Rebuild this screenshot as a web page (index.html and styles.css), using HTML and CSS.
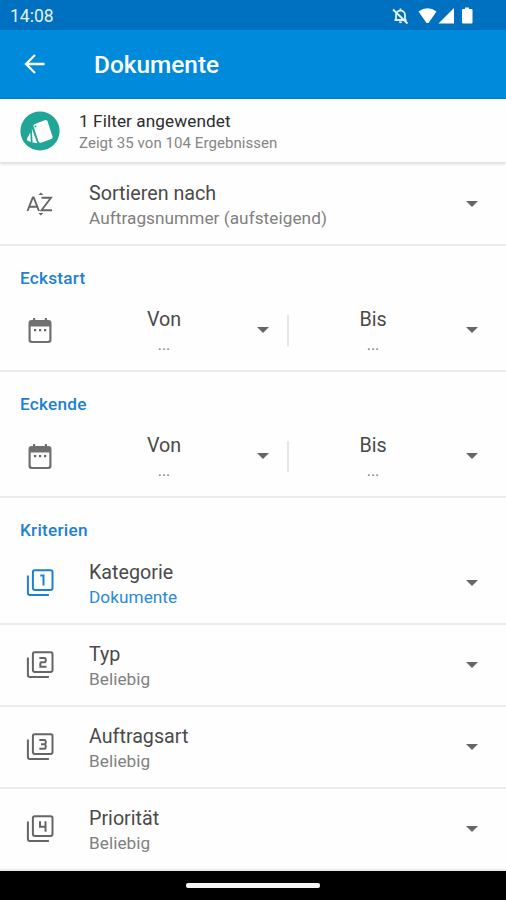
FILE: index.html
```html
<!DOCTYPE html>
<html lang="de">

<head>
  <meta charset="UTF-8">
  <meta name="viewport" content="width=device-width, initial-scale=1.0">
  <title>Dokumente</title>

  <link rel="stylesheet" href="styles.css">
</head>

<body>
  <div class="statusbar">
    <span class="clock">14:08</span>
    <svg class="status-icons" width="84" height="20" viewBox="0 0 84 20">
      <g fill="none" stroke="#e6f1fa" stroke-width="1.8">
        <path d="M4.500 14h12M6 13.500V9a4.500 4.500 0 0 1 9 0v4.500M10.500 4.500V2.500"/>
        <path d="M3 3.500l14.500 14"/>
      </g>
      <path d="M8.800 15.500h3.400a1.700 1.700 0 0 1-3.400 0z" fill="#e6f1fa"/>
      <path d="M28.500 5.500Q37.500-1 46.500 5.500L38.500 17h-2z" fill="#fff"/>
      <path d="M64 2v15.500H48.500z" fill="#fff"/>
      <path d="M75 1.500h4v1.500h2.500q1 0 1 1V16.500q0 1-1 1h-8.500q-1 0-1-1V4q0-1 1-1H75z" fill="#fff"/>
    </svg>
  </div>

  <div class="appbar">
    <svg class="back" width="22" height="22" viewBox="0 0 22 22">
      <path d="M11 2L2 11l9 9M2.500 11H20.500" fill="none" stroke="#fff" stroke-width="2.300"/>
    </svg>
    <h1>Dokumente</h1>
  </div>

  <div class="filter">
    <svg class="avatar" width="40" height="40" viewBox="0 0 40 40">
      <circle cx="20" cy="20" r="19.600" fill="#20a596"/>
      <path d="M14.500 13.200Q13.200 13.800 13.500 15.200L18.500 30.500Q19.200 32.300 21 31.700L31.300 28Q33 27.200 32.500 25.600L27.500 10.200Q26.800 8.600 25.200 9.100z" fill="#fff"/>
      <circle cx="15.400" cy="15.500" r="1.100" fill="#20a596"/>
      <path d="M11.800 17.500L17.300 32.300 12.600 31.500z" fill="#fff"/>
      <path d="M10.300 21.500L10.800 31 8 29.800Q6.400 29 7.100 27.400z" fill="#fff"/>
    </svg>
    <div class="filter-text">
      <div class="filter-title">1 Filter angewendet</div>
      <div class="filter-sub">Zeigt 35 von 104 Ergebnissen</div>
    </div>
  </div>

  <div class="row">
    <svg class="icon" width="30" height="30" viewBox="0 0 30 30">
      <path d="M2.500 22L7.800 8.500h.9L14 22M4.300 17.800h8M16.500 8.800h9.500L16.500 21.300h10.500" fill="none" stroke="#666" stroke-width="1.900"/>
      <path d="M13.400 6h5L15.900 3.600zM13.400 24h5l-2.500 2.400z" fill="#666"/>
    </svg>
    <div class="text">
      <div class="title">Sortieren nach</div>
      <div class="sub">Auftragsnummer (aufsteigend)</div>
    </div>
    <span class="arrow"></span>
  </div>

  <div class="section">
    <h2>Eckstart</h2>
    <div class="range">
      <svg class="icon" width="30" height="30" viewBox="0 0 30 30">
        <path d="M8 3h2.200v2h9.600V3H22v2h1.500q3 0 3 3v17q0 3-3 3h-17q-3 0-3-3V8q0-3 3-3H8zM5.700 11.500V24.500q0 1.400 1.400 1.400H22.900q1.400 0 1.400-1.400V11.500z" fill="#707070"/>
        <path d="M9 14h2.200v2.200H9zM14 14h2.200v2.200H14zM19 14h2.200v2.200H19z" fill="#666"/>
      </svg>
      <div class="date"><span class="title">Von</span><span class="dots">...</span></div>
      <span class="arrow"></span>
      <span class="divider"></span>
      <div class="date"><span class="title">Bis</span><span class="dots">...</span></div>
      <span class="arrow"></span>
    </div>
  </div>

  <div class="section">
    <h2>Eckende</h2>
    <div class="range">
      <svg class="icon" width="30" height="30" viewBox="0 0 30 30">
        <path d="M8 3h2.200v2h9.600V3H22v2h1.500q3 0 3 3v17q0 3-3 3h-17q-3 0-3-3V8q0-3 3-3H8zM5.700 11.500V24.500q0 1.400 1.400 1.400H22.900q1.400 0 1.400-1.400V11.500z" fill="#707070"/>
        <path d="M9 14h2.200v2.200H9zM14 14h2.200v2.200H14zM19 14h2.200v2.200H19z" fill="#666"/>
      </svg>
      <div class="date"><span class="title">Von</span><span class="dots">...</span></div>
      <span class="arrow"></span>
      <span class="divider"></span>
      <div class="date"><span class="title">Bis</span><span class="dots">...</span></div>
      <span class="arrow"></span>
    </div>
  </div>

  <div class="criteria">
    <h2>Kriterien</h2>
    <div class="row active">
      <svg class="icon box" width="30" height="30" viewBox="0 0 30 30">
        <rect x="7.900" y="2.300" width="19.600" height="19.600" rx="1.800"/>
        <path d="M2.900 7.500V25q0 2 2 2h19"/>
        <path d="M15.300 7.500h3.200v10"/>
      </svg>
      <div class="text">
        <div class="title">Kategorie</div>
        <div class="sub">Dokumente</div>
      </div>
      <span class="arrow"></span>
    </div>
    <div class="row">
      <svg class="icon box" width="30" height="30" viewBox="0 0 30 30">
        <rect x="7.900" y="2.300" width="19.600" height="19.600" rx="1.800"/>
        <path d="M2.900 7.500V25q0 2 2 2h19"/>
        <path d="M14.300 8h5.200q1.200 0 1.200 1.200v1.900q0 1.200-1.200 1.200h-2.800q-1.400 0-1.400 1.400v3.100h6.200"/>
      </svg>
      <div class="text">
        <div class="title">Typ</div>
        <div class="sub">Beliebig</div>
      </div>
      <span class="arrow"></span>
    </div>
    <div class="row">
      <svg class="icon box" width="30" height="30" viewBox="0 0 30 30">
        <rect x="7.900" y="2.300" width="19.600" height="19.600" rx="1.800"/>
        <path d="M2.900 7.500V25q0 2 2 2h19"/>
        <path d="M14.300 8h5q1.400 0 1.400 1.400v1.500q0 1.400-1.400 1.400H16h3.300q1.400 0 1.400 1.400v1.700q0 1.400-1.400 1.400h-5"/>
      </svg>
      <div class="text">
        <div class="title">Auftragsart</div>
        <div class="sub">Beliebig</div>
      </div>
      <span class="arrow"></span>
    </div>
    <div class="row">
      <svg class="icon box" width="30" height="30" viewBox="0 0 30 30">
        <rect x="7.900" y="2.300" width="19.600" height="19.600" rx="1.800"/>
        <path d="M2.900 7.500V25q0 2 2 2h19"/>
        <path d="M15 7.200v5.600h5.500M20.500 7.200v10.500"/>
      </svg>
      <div class="text">
        <div class="title">Priorität</div>
        <div class="sub">Beliebig</div>
      </div>
      <span class="arrow"></span>
    </div>
  </div>

  <div class="navbar"><span class="handle"></span></div>
</body>

</html>
```
FILE: styles.css
```css
* {
  margin: 0;
  padding: 0;
  box-sizing: border-box;
}

body {
  width: 506px;
  height: 900px;
  overflow: hidden;
  background: #fefefe;
  font-family: Roboto, "Liberation Sans", sans-serif;
  color: #4a4a4a;
}

svg {
  display: block;
  flex: none;
}

.statusbar {
  height: 30px;
  padding: 1px 32px 0 10px;
  display: flex;
  align-items: center;
  justify-content: space-between;
  background: #0070c0;
}

.clock {
  color: #e6f1fa;
  font-size: 17.5px;
}

.appbar {
  height: 69px;
  padding-left: 24px;
  display: flex;
  align-items: center;
  background: #008adb;
  border-bottom: 1px solid #0079cb;
}

.appbar h1 {
  margin-left: 48px;
  color: #fff;
  font-size: 24.4px;
  font-weight: 500;
}

.filter {
  height: 64px;
  padding-left: 20px;
  display: flex;
  align-items: center;
  border-bottom: 1px solid #e2e2e2;
  box-shadow: 0 1px 3px rgba(0, 0, 0, 0.15);
}

.filter-text {
  margin-left: 19px;
  padding-top: 2px;
}

.filter-title {
  color: #2c2c2c;
  font-size: 17.2px;
  line-height: 22px;
  letter-spacing: 0.08px;
}

.filter-sub {
  color: #858585;
  font-size: 15px;
  line-height: 22px;
  letter-spacing: 0.06px;
}

.row {
  height: 82px;
  padding: 0 28px 0 25px;
  display: flex;
  align-items: center;
  border-bottom: 2px solid #ebebeb;
}

.filter + .row {
  height: 83px;
}

.text {
  flex: 1;
  margin-left: 34px;
  padding-top: 1px;
}

.filter + .row .text {
  padding-top: 3px;
}

.title {
  font-size: 19.7px;
  line-height: 26px;
}

.sub {
  color: #808080;
  font-size: 17.2px;
  line-height: 22px;
  letter-spacing: 0.06px;
}

.arrow {
  width: 12px;
  border: 6px solid transparent;
  border-top-color: #666;
  border-bottom: 0;
}

h2 {
  color: #1c80d3;
  font-size: 17.2px;
  font-weight: 500;
  line-height: 24px;
  letter-spacing: 0.25px;
}

.section {
  height: 126px;
  padding: 20px 28px 0 20px;
  border-bottom: 2px solid #ebebeb;
}

.range {
  margin-top: 13px;
  padding-left: 5px;
  display: flex;
  align-items: center;
  height: 54px;
}

.date {
  flex: none;
  width: 168px;
  height: 54px;
  margin-left: 25px;
  display: flex;
  flex-direction: column;
  align-items: center;
}

.date .title {
  margin-top: 4px;
}

.dots {
  color: #808080;
  font-size: 16px;
  line-height: 24px;
}

.range .arrow {
  margin-left: 9px;
}

.divider {
  width: 2px;
  height: 31px;
  margin-left: 18px;
  background: #e6e6e6;
}

.divider + .date {
  margin-left: 0;
}

.divider + .date + .arrow {
  margin-left: auto;
}

.criteria h2 {
  height: 45px;
  padding: 20px 0 0 20px;
}

.box {
  fill: none;
  stroke: #666;
  stroke-width: 2;
}

.active .box {
  stroke: #1c80d3;
}

.active .sub {
  color: #2b89d6;
}

.navbar {
  height: 30px;
  padding-top: 12px;
  background: #000;
}

.handle {
  display: block;
  width: 134px;
  height: 5px;
  margin: 0 auto;
  border-radius: 2px;
  background: #f4f4f4;
}
```
